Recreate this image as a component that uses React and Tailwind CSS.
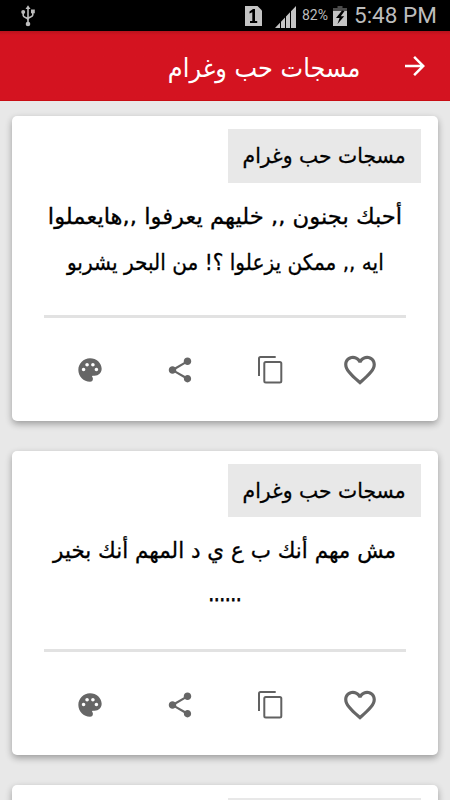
import React from 'react';
import { MdArrowForward, MdFavoriteBorder, MdPalette, MdShare } from 'react-icons/md';

const messages = [
  {
    id: 1,
    category: 'مسجات حب وغرام',
    lines: [
      { text: 'أحبك بجنون ,, خليهم يعرفوا ,,هايعملوا', className: 'scale-x-[1.03]' },
      { text: 'ايه ,, ممكن يزعلوا ؟! من البحر يشربو', className: 'scale-x-[0.914]' },
    ],
  },
  {
    id: 2,
    category: 'مسجات حب وغرام',
    lines: [
      { text: 'مش مهم أنك ب ع ي د المهم أنك بخير', className: 'scale-x-[0.977]' },
      { text: '......', className: 'relative -top-[3px] scale-x-[0.78] [-webkit-text-stroke:0.8px_black]' },
    ],
  },
  { id: 3, category: '', lines: [] },
];

const UsbIcon = () => (
  <svg width="14" height="22" viewBox="0 0 14 22" fill="none" stroke="#bdbdbd" strokeWidth="1.6">
    <path d="M7 3v15M2.2 7v3.600c0 2.400 4.800 1.200 4.800 4.400M11.800 6.500v3.600c0 2.400-4.800 1.200-4.800 4.400" />
    <path d="M7 .3l2.500 3.700h-5z" fill="#bdbdbd" stroke="none" />
    <circle cx="2.200" cy="7" r="2" fill="#bdbdbd" stroke="none" />
    <rect x="10" y="4.500" width="3.800" height="3.800" fill="#bdbdbd" stroke="none" />
    <circle cx="7" cy="19" r="2.300" fill="#bdbdbd" stroke="none" />
  </svg>
);

const SimIcon = () => (
  <svg width="17" height="20" viewBox="0 0 17 20">
    <path d="M0 0h12.500L17 4.500V20H0z" fill="#c4c4c4" />
    <path d="M4.500 5.500L8 3h2v12h2.200v2H5v-2h2.300V6.200L4.500 7.500z" fill="#000" />
  </svg>
);

const SignalIcon = () => (
  <svg width="21" height="22" viewBox="0 0 21 22" fill="#c4c4c4">
    <path d="M0 22l5-5.200V22zM6 15.700l4-4.200V22H6zM11 10.500l4-4.200V22h-4zM16 5.200L21 0v22h-5z" />
  </svg>
);

const BatteryIcon = () => (
  <svg width="14" height="20" viewBox="0 0 14 20">
    <path d="M4.500 0h5v2H14v3H0V2h4.500z" fill="#4b4b4b" />
    <path d="M0 5h14v15H0z" fill="#c4c4c4" />
    <path d="M9 4.500L3 12h3.600L4.500 18 11.200 10.200H7.800L11.500 5z" fill="#000" />
  </svg>
);

const CopyIcon = () => (
  <svg width="25" height="28" viewBox="0 0 25 28" fill="none" stroke="#616161" strokeWidth="2">
    <path d="M1 20V2.500Q1 1 2.500 1H17.700" />
    <rect x="6.300" y="6" width="17" height="20.500" rx="1.500" />
  </svg>
);

const StatusBar = () => (
  <div dir="ltr" className="flex h-[31px] items-center justify-between bg-black pr-[13px] pl-[21px] font-[Roboto,sans-serif] text-[#bdbdbd]">
    <UsbIcon />
    <div className="flex items-center">
      <SimIcon />
      <div className="mt-[2px] ml-[13px]"><SignalIcon /></div>
      <span className="ml-[6px] w-[28px] whitespace-nowrap text-[14px]">82%</span>
      <div className="ml-[3px]"><BatteryIcon /></div>
      <span className="ml-[7px] w-[83px] whitespace-nowrap text-[22.5px] leading-none">5:48 PM</span>
    </div>
  </div>
);

const Header = () => (
  <header className="flex h-[70px] items-center border-b border-[#c80d14] bg-linear-to-b from-[#b8121c] to-[#d41320] to-[4px] pr-5 text-white">
    <MdArrowForward size={30} />
    <h1 className="mt-1.5 mr-10 origin-right scale-x-[0.924] whitespace-nowrap text-[26px]">مسجات حب وغرام</h1>
  </header>
);

const MessageCard = ({ message }) => (
  <div className="flex h-[304.5px] shrink-0 flex-col rounded-[5px] bg-white pt-[13px] shadow-[0_3px_7px_rgba(0,0,0,0.33)]">
    <div className="mr-[17px] flex h-[53.500px] w-[193px] items-center justify-center bg-[#e8e8e8] pt-[2px]">
      {message.category && (
        <span className="scale-x-[0.97] whitespace-nowrap text-[21px] [-webkit-text-stroke:0.3px_black]">{message.category}</span>
      )}
    </div>
    <div className="flex h-[132px] flex-col items-center pt-[11px]">
      {message.lines.map((line) => (
        <p key={line.text} className="h-[46px] whitespace-nowrap text-[22px] leading-[46px] [-webkit-text-stroke:0.3px_black]">
          <span className={`inline-block ${line.className}`}>{line.text}</span>
        </p>
      ))}
    </div>
    <div className="mx-8 h-[3px] shrink-0 bg-[#e2e2e2]" />
    <div className="mx-[33px] mt-[33px] grid h-[39px] grid-cols-4 place-items-center text-[#666]">
      <MdFavoriteBorder size={38} />
      <CopyIcon />
      <MdShare size={30} />
      <MdPalette size={28} />
    </div>
  </div>
);

const App = () => (
  <div dir="rtl" className="flex h-[800px] w-[450px] flex-col overflow-hidden bg-[#e8e8e8] font-['DejaVu_Sans',sans-serif] text-black">
    <StatusBar />
    <Header />
    <main className="flex flex-1 flex-col gap-[30px] overflow-hidden px-3 pt-[15px]">
      {messages.map((message) => (
        <MessageCard key={message.id} message={message} />
      ))}
    </main>
  </div>
);

export default App;
